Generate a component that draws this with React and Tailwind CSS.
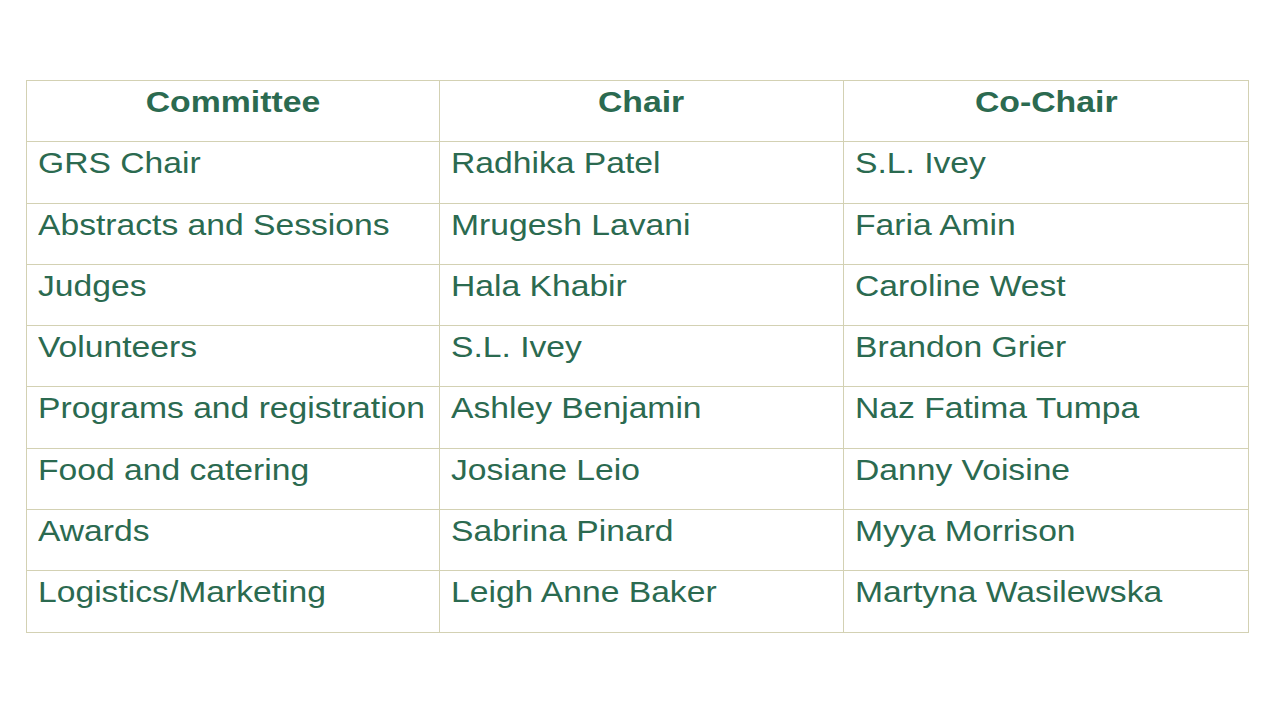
import React from "react";

const rows = [
  ["GRS Chair", "Radhika Patel", "S.L. Ivey"],
  ["Abstracts and Sessions", "Mrugesh Lavani", "Faria Amin"],
  ["Judges", "Hala Khabir", "Caroline West"],
  ["Volunteers", "S.L. Ivey", "Brandon Grier"],
  ["Programs and registration", "Ashley Benjamin", "Naz Fatima Tumpa"],
  ["Food and catering", "Josiane Leio", "Danny Voisine"],
  ["Awards", "Sabrina Pinard", "Myya Morrison"],
  ["Logistics/Marketing", "Leigh Anne Baker", "Martyna Wasilewska"],
];

export default function App() {
  return (
    <div className="w-[1280px] h-[720px] bg-white pt-[80px] pl-[26px]" style={{ fontFamily: '"Liberation Sans", Arial, sans-serif' }}>
      <table className="border-collapse table-fixed w-[1222px] text-[#2b6a50] text-[29px] leading-[34px]">
        <colgroup>
          <col className="w-[413px]" />
          <col className="w-[404px]" />
          <col className="w-[405px]" />
        </colgroup>
        <thead>
          <tr className="h-[61.3px]">
            {["Committee", "Chair", "Co-Chair"].map((h) => (
              <th key={h} className="border border-[#d3d1b3] font-bold text-center align-top pt-[4px] px-0 whitespace-nowrap">
                <span className="inline-block origin-center scale-x-[1.165]">{h}</span>
              </th>
            ))}
          </tr>
        </thead>
        <tbody>
          {rows.map((r, i) => (
            <tr key={i} className="h-[61.3px]">
              {r.map((c, j) => (
                <td key={j} className="border border-[#d3d1b3] align-top pt-[4px] pl-[11px] pr-0 whitespace-nowrap">
                  <span className="inline-block origin-left scale-x-[1.16]">{c}</span>
                </td>
              ))}
            </tr>
          ))}
        </tbody>
      </table>
    </div>
  );
}
